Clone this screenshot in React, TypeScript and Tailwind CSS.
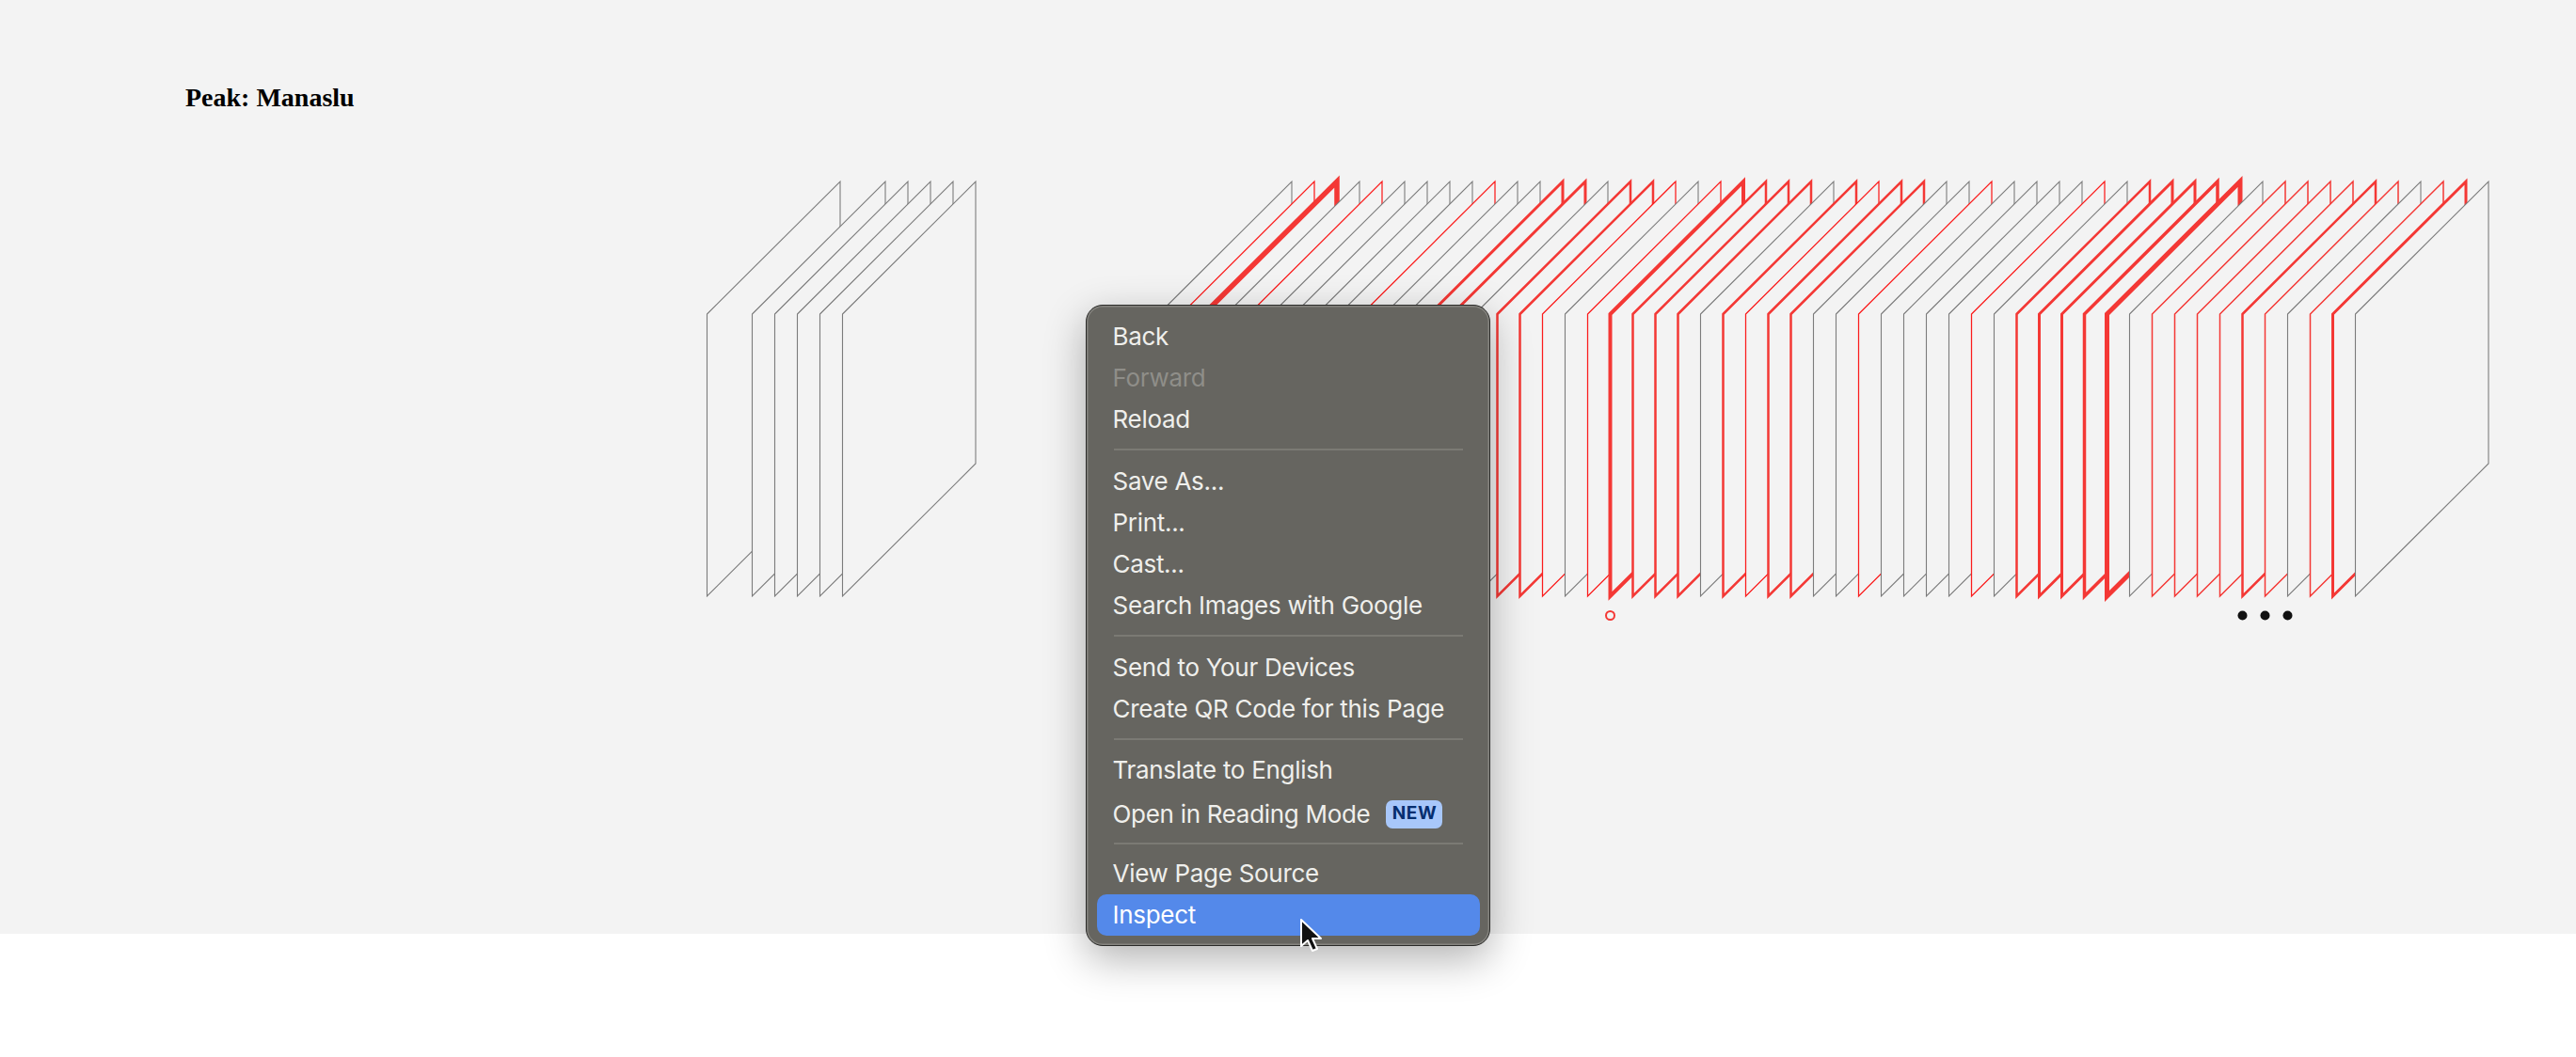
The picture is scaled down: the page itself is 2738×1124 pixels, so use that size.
const PLANE_BG = "#f3f3f3";

// stroke width per plane, 0 = untouched (grey)
const planes: Record<number, number> = {
  0: 0, 2: 0, 3: 0, 4: 0, 5: 0, 6: 0,
  20: 0, 21: 1, 22: 5.5, 23: 0, 24: 1, 25: 0, 26: 0, 27: 0, 28: 0, 29: 1,
  30: 0, 31: 0, 32: 3, 33: 3, 34: 0, 35: 2.5, 36: 2.5, 37: 1, 38: 0, 39: 1,
  40: 4, 41: 2.5, 42: 2.5, 43: 2.5, 44: 0, 45: 2.5, 46: 1, 47: 2.5, 48: 2.5, 49: 0,
  50: 0, 51: 1, 52: 0, 53: 0, 54: 0, 55: 0, 56: 1, 57: 0, 58: 2.5, 59: 3,
  60: 3, 61: 3.5, 62: 5, 63: 0, 64: 1.5, 65: 1.5, 66: 1.5, 67: 1.5, 68: 2.5, 69: 1.5,
  70: 0, 71: 1.5, 72: 3, 73: 0,
};

function Planes() {
  return (
    <svg width="2000" height="500" viewBox="0 0 2000 500" className="block">
      {Object.entries(planes).map(([i, w]) => {
        const x = 11.5 + 24 * Number(i);
        return (
          <polygon
            key={i}
            points={`${x},164 ${x + 141.5},23 ${x + 141.5},323 ${x},464`}
            fill={PLANE_BG}
            stroke={w === 0 ? "#7c7c7c" : w === 1 ? "#fb1c1c" : "#f43835"}
            strokeWidth={w === 0 ? 1.1 : w === 1 ? 1.25 : w}
            strokeMiterlimit={10}
          />
        );
      })}
      <circle cx={971.5} cy={484.5} r={4.5} fill="none" stroke="#f43835" strokeWidth={2} />
      <circle cx={1643.5} cy={484.5} r={5} fill="#111" />
      <circle cx={1667.5} cy={484.5} r={5} fill="#111" />
      <circle cx={1691.5} cy={484.5} r={5} fill="#111" />
    </svg>
  );
}

function Row({ label, disabled, active, badge }: { label: string; disabled?: boolean; active?: boolean; badge?: boolean }) {
  return (
    <div
      className={
        "flex h-[44px] items-center rounded-[10px] pl-[17px] text-[26px] tracking-[-0.3px] " +
        (disabled ? "text-[#8f8e89]" : active ? "bg-[#5489ea] text-white" : "text-[#efefec]") +
        (badge ? " mt-[3px]" : "")
      }
    >
      <span>{label}</span>
      {badge && (
        <span className="ml-[17px] flex h-[30px] w-[60px] items-center justify-center rounded-[7px] bg-[#a8c7fa] text-[19px] font-bold tracking-[0.6px] text-[#062e6f]">
          NEW
        </span>
      )}
    </div>
  );
}

export default function App() {
  return (
    <div className="relative h-[1124px] overflow-hidden bg-white font-['Liberation_Serif',serif]">
      <section className="h-[993px] bg-[#f3f3f3] pl-[197px] pt-[86px]">
        <h1 className="text-[28px] font-bold leading-[36px] text-black">Peak: Manaslu</h1>
        <div className="-ml-[197px] mt-[48px] pl-[740px]">
          <Planes />
        </div>
      </section>

      <div className="absolute left-[1154px] top-[324px] h-[682px] w-[430px] rounded-[18px] border-[1.5px] border-[#2a2a28] bg-[#666560] px-[10.5px] pt-[10.5px] font-['Inter',sans-serif] shadow-[0_14px_44px_rgba(0,0,0,0.3),inset_0_0_0_1.5px_#85847f]">
        <Row label="Back" />
        <Row label="Forward" disabled />
        <Row label="Reload" />
        <div className="mx-[18px] mb-[11px] mt-[9px] h-[2px] bg-[#7b7a74]" />
        <Row label="Save As..." />
        <Row label="Print..." />
        <Row label="Cast..." />
        <Row label="Search Images with Google" />
        <div className="mx-[18px] mb-[11px] mt-[9px] h-[2px] bg-[#7b7a74]" />
        <Row label="Send to Your Devices" />
        <Row label="Create QR Code for this Page" />
        <div className="mx-[18px] mb-[10px] mt-[9px] h-[2px] bg-[#7b7a74]" />
        <Row label="Translate to English" />
        <Row label="Open in Reading Mode" badge />
        <div className="mx-[18px] mb-[9px] mt-[8px] h-[2px] bg-[#7b7a74]" />
        <Row label="View Page Source" />
        <Row label="Inspect" active />
      </div>

      <svg width="28" height="40" viewBox="0 0 28 40" className="absolute left-[1379px] top-[975px]">
        <path d="M4 3 L4 31 L11 25 L16 36 L21 34 L16 23 L25 23 Z" fill="#111" stroke="#fff" strokeWidth="2" strokeLinejoin="round" />
      </svg>
    </div>
  );
}
